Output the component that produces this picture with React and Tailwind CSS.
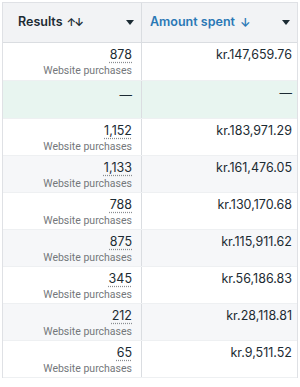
import React from "react";

const rows = [
  { n: "878", a: "kr.147,659.76", bg: "bg-white" },
  { dash: true, bg: "bg-[#e8f5f0]" },
  { n: "1,152", a: "kr.183,971.29", bg: "bg-white" },
  { n: "1,133", a: "kr.161,476.05", bg: "bg-[#f6f7f9]" },
  { n: "788", a: "kr.130,170.68", bg: "bg-white" },
  { n: "875", a: "kr.115,911.62", bg: "bg-[#f6f7f9]" },
  { n: "345", a: "kr.56,186.83", bg: "bg-white" },
  { n: "212", a: "kr.28,118.81", bg: "bg-[#f6f7f9]" },
  { n: "65", a: "kr.9,511.52", bg: "bg-white" },
];

function Caret() {
  return (
    <svg width="8" height="5" viewBox="0 0 8 5" className="shrink-0">
      <path d="M0 0h8L4 5z" fill="#1c2b33" />
    </svg>
  );
}

export default function App() {
  return (
    <div
      className="w-[300px] h-[387px] bg-white pt-[2px] pl-[2px] text-[#1c2b33]"
      style={{ fontFamily: "Inter, Roboto, 'Liberation Sans', sans-serif" }}
    >
      <div className="w-[296px] border-l border-t border-r border-[#dfe1e5]">
        <div className="flex h-[40px] bg-[#f2f3f5] border-b border-[#dadde1]">
          <div className="w-[139px] border-r border-[#dadde1] flex items-center pl-[15px] pr-[7px]">
            <span className="text-[12.5px] font-semibold">Results</span>
            <span className="ml-[4px] text-[11px] font-semibold leading-none tracking-[-2px]">↑↓</span>
            <div className="flex-1" />
            <Caret />
          </div>
          <div className="flex-1 flex items-center pl-[8px] pr-[7px]">
            <span className="text-[12.5px] font-semibold text-[#2a78b5]">Amount spent</span>
            <span className="ml-[5px] text-[12px] font-semibold text-[#2a78b5] leading-none">↓</span>
            <div className="flex-1" />
            <Caret />
          </div>
        </div>
        {rows.map((r, i) => (
          <div
            key={i}
            className={`flex ${i < 2 ? "h-[38px]" : "h-[37px]"} ${r.bg} border-b border-[#eef0f2]`}
          >
            <div className="w-[139px] border-r border-[#dadde1] flex flex-col items-end pr-[9px] pt-[3px]">
              {r.dash ? (
                <span className="text-[12.5px] mt-[2px]">—</span>
              ) : (
                <>
                  <span className="text-[12.5px] leading-[17px] underline decoration-dotted decoration-[#8a8d91] underline-offset-[3px]">
                    {r.n}
                  </span>
                  <span
                    className="text-[10.5px] leading-[16px] text-[#74777b]"
                    style={{ fontFamily: "Roboto, 'Liberation Sans', sans-serif" }}
                  >
                    Website purchases
                  </span>
                </>
              )}
            </div>
            <div className="flex-1 flex flex-col items-end pr-[5px] pt-[3px]">
              <span className="text-[12.5px] leading-[17px]">{r.dash ? "—" : r.a}</span>
            </div>
          </div>
        ))}
      </div>
    </div>
  );
}
